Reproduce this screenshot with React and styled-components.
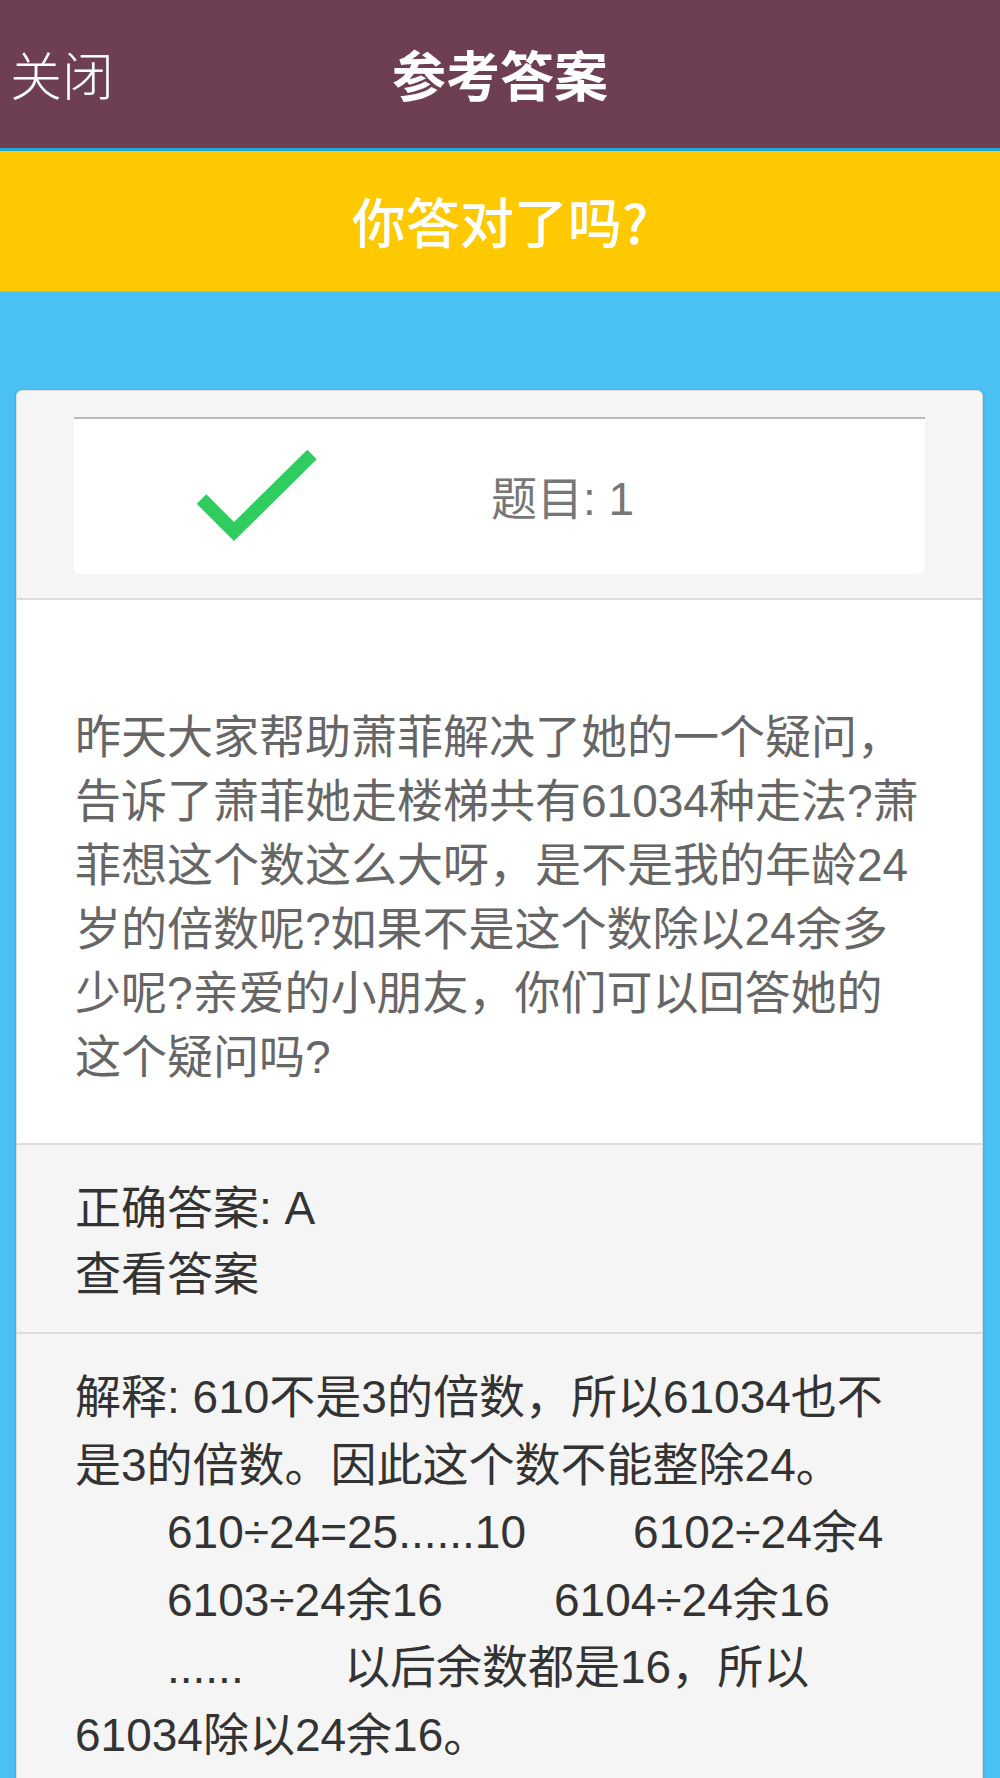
import React from "react";
import styled, { createGlobalStyle } from "styled-components";

const Global = createGlobalStyle`
  html, body { margin: 0; padding: 0; background: #4bc0f2; }
  body { font-family: "Liberation Sans", "Noto Sans CJK SC", sans-serif; }
  * { box-sizing: border-box; }
`;

const Page = styled.div`
  width: 1000px;
  min-height: 1778px;
  background: #4bc0f2;
  display: flex;
  flex-direction: column;
`;

const Header = styled.header`
  height: 151px;
  background: #6e3f52;
  border-bottom: 3px solid #23a3d6;
  display: grid;
  grid-template-columns: 1fr auto 1fr;
  align-items: center;
  color: #fff;
  padding-bottom: 2px;
`;

const Close = styled.span`
  justify-self: start;
  padding-left: 10px;
  font-size: 52px;
  font-weight: 300;
`;

const Title = styled.h1`
  margin: 0;
  font-size: 54px;
  font-weight: 700;
`;

const Banner = styled.div`
  height: 141px;
  background: #ffc900;
  border-bottom: 1px solid #eeb700;
  display: flex;
  align-items: center;
  justify-content: center;
  color: #fff;
  font-family: "Noto Sans CJK SC", sans-serif;
  font-size: 54px;
  font-weight: 500;
  padding-bottom: 2px;
`;

const Main = styled.main`
  padding: 98px 17px 0 16px;
`;

const Card = styled.section`
  background: #f5f5f5;
  border: 1px solid #dcdcdc;
  border-radius: 6px;
  box-shadow: 0 1px 3px rgba(0, 0, 0, 0.22);
  overflow: hidden;
`;

const Top = styled.div`
  padding: 26px 57px 24px 57px;
`;

const ResultBox = styled.div`
  height: 157px;
  background: #fff;
  border-top: 2px solid #b9b9b9;
  border-radius: 0 0 6px 6px;
  display: flex;
  align-items: center;
`;

const CheckIcon = styled.svg`
  width: 140px;
  height: 110px;
  margin-left: 116px;
  flex: none;
`;

const Topic = styled.span`
  margin-left: 161px;
  font-size: 46px;
  color: #777;
  margin-top: -4px;
`;

const Section = styled.div`
  border-top: 2px solid #dcdcdc;
  background: ${(p) => (p.$white ? "#fff" : "#f5f5f5")};
  color: ${(p) => (p.$muted ? "#666" : "#333")};
  font-size: 46px;
  line-height: ${(p) => p.$lh}px;
  padding: ${(p) => p.$pad};
`;

const Line = styled.div`
  white-space: nowrap;
  padding-left: ${(p) => p.$indent || 0}px;
`;

const Seg = styled.span`
  display: inline-block;
  width: ${(p) => p.$w}px;
`;

function Check() {
  return (
    <CheckIcon viewBox="0 0 140 110">
      <polyline
        points="11.5,57 44,89.5 122,12.5"
        fill="none"
        stroke="#2fcc5f"
        strokeWidth="13.5"
        strokeLinejoin="miter"
        strokeLinecap="butt"
      />
    </CheckIcon>
  );
}

export default function App() {
  return (
    <Page>
      <Global />
      <Header>
        <Close>关闭</Close>
        <Title>参考答案</Title>
        <span />
      </Header>
      <Banner>你答对了吗?</Banner>
      <Main>
        <Card>
          <Top>
            <ResultBox>
              <Check />
              <Topic>题目: 1</Topic>
            </ResultBox>
          </Top>
          <Section $white $muted $lh={64} $pad="105px 40px 54px 58px">
            <Line>昨天大家帮助萧菲解决了她的一个疑问，</Line>
            <Line>告诉了萧菲她走楼梯共有61034种走法?萧</Line>
            <Line>菲想这个数这么大呀，是不是我的年龄24</Line>
            <Line>岁的倍数呢?如果不是这个数除以24余多</Line>
            <Line>少呢?亲爱的小朋友，你们可以回答她的</Line>
            <Line>这个疑问吗?</Line>
          </Section>
          <Section $lh={66} $pad="30px 40px 25px 58px">
            <Line>正确答案: A</Line>
            <Line>查看答案</Line>
          </Section>
          <Section $lh={67.6} $pad="30px 40px 120px 58px">
            <Line>解释: 610不是3的倍数，所以61034也不</Line>
            <Line>是3的倍数。因此这个数不能整除24。</Line>
            <Line $indent={92}>
              <Seg $w={466}>610÷24=25......10</Seg>6102÷24余4
            </Line>
            <Line $indent={92}>
              <Seg $w={387}>6103÷24余16</Seg>6104÷24余16
            </Line>
            <Line $indent={92}>
              <Seg $w={177}>......</Seg>以后余数都是16，所以
            </Line>
            <Line>61034除以24余16。</Line>
          </Section>
        </Card>
      </Main>
    </Page>
  );
}
